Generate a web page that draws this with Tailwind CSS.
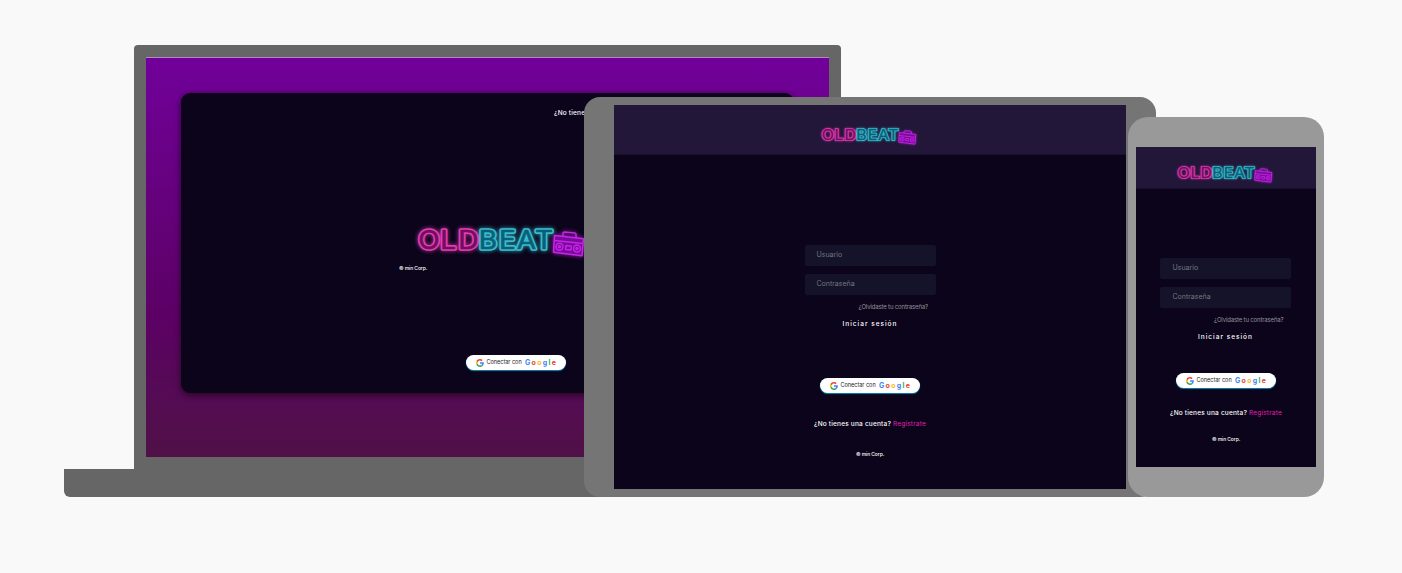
<!DOCTYPE html>
<html lang="es">
<head>
<meta charset="utf-8">
<title>OldBeat</title>
<script src="https://cdn.jsdelivr.net/npm/@tailwindcss/browser@4"></script>
</head>
<body class="bg-[#f9f9f9] w-[1402px] h-[573px] overflow-hidden font-['Inter','Roboto',sans-serif] text-white">
<svg class="hidden">
  <defs>
    <filter id="glow" x="-15%" y="-40%" width="130%" height="180%"><feGaussianBlur stdDeviation="2"/></filter>
    <g id="tubes" font-family="Inter, sans-serif" font-weight="400" font-size="25" stroke-linejoin="round" transform="scale(1.12 1)">
      <text x="5.500 25.300 41.200" y="27.300">OLD</text>
    </g>
    <g id="tubes2" font-family="Inter, sans-serif" font-weight="400" font-size="25" stroke-linejoin="round" transform="scale(1.12 1)">
      <text x="59.600 77.600 93.600 109.800" y="27.300">BEAT</text>
    </g>
    <g id="words">
      <use href="#tubes" fill="#e23eb6" stroke="#e23eb6" stroke-width="3.700"/>
      <use href="#tubes" fill="#720e5c" stroke="#720e5c" stroke-width="0.600"/>
      <use href="#tubes2" fill="#3cbccd" stroke="#3cbccd" stroke-width="3.700"/>
      <use href="#tubes2" fill="#086078" stroke="#086078" stroke-width="0.600"/>
    </g>
    <g id="radio" fill="#7a0a9c" stroke="#c526e4" stroke-width="1.5" stroke-linejoin="round">
      <path d="M151 14v-3l1-1 11 1 1 1v4" fill="none"/>
      <path d="M142.500 13.500l29 3.200-1.500 17-28.500-3.500z"/>
      <path d="M142 18.500l29 3" fill="none"/>
      <circle cx="147.500" cy="24.800" r="3.500"/><circle cx="165" cy="26.600" r="3.500"/>
      <circle cx="147.500" cy="24.800" r="1"/><circle cx="165" cy="26.600" r="1"/>
      <path d="M154 23.500l5.200.5-.3 4-5.200-.5z"/>
    </g>
    <symbol id="logo" viewBox="0 0 180 44">
      <g filter="url(#glow)"><use href="#words"/><use href="#radio"/></g>
      <use href="#words"/><use href="#radio"/>
    </symbol>
    <symbol id="g" viewBox="0 0 48 48">
      <path fill="#ea4335" d="M24 9.500c3.540 0 6.710 1.220 9.210 3.600l6.850-6.850C35.900 2.380 30.470 0 24 0 14.620 0 6.510 5.380 2.560 13.220l7.980 6.190C12.430 13.720 17.740 9.500 24 9.500z"/>
      <path fill="#4285f4" d="M46.980 24.550c0-1.570-.15-3.090-.38-4.550H24v9.020h12.940c-.58 2.960-2.260 5.480-4.780 7.180l7.730 6c4.510-4.180 7.090-10.360 7.090-17.650z"/>
      <path fill="#fbbc05" d="M10.530 28.590A14.500 14.500 0 0 1 9.770 24c0-1.600.27-3.140.76-4.590l-7.980-6.190A23.900 23.900 0 0 0 0 24c0 3.880.92 7.540 2.560 10.780z"/>
      <path fill="#34a853" d="M24 48c6.480 0 11.930-2.130 15.890-5.810l-7.730-6c-2.150 1.450-4.920 2.300-8.160 2.300-6.260 0-11.570-4.220-13.470-9.910l-7.980 6.190C6.510 42.620 14.620 48 24 48z"/>
    </symbol>
  </defs>
</svg>

<main class="flex items-end h-[497px] pl-16 w-[1402px]">
  <!-- Laptop -->
  <section class="flex flex-col items-center shrink-0 w-[847px]">
    <div class="w-[707px] h-[424px] bg-[#666] rounded-t-[4px] p-3">
      <div class="w-[683px] h-[400px] border-t border-[#b18ac0] bg-linear-to-b from-[#71009a] via-[#5c0065] via-65% to-[#501047] pt-[35px] pl-[35px]">
        <div class="w-[613px] h-[300px] rounded-[9px] bg-[#0b041a] shadow-[0_2px_7px_rgba(0,0,0,0.6)] flex flex-col">
          <p class="ml-[373px] mt-[15px] h-[10px] leading-[10px] text-[6.500px] font-medium whitespace-nowrap tracking-[0.200px]">¿No tienes una cuenta? <span class="text-[#e01fb5] font-normal">Regístrate</span></p>
          <svg class="w-[180px] h-[44px] ml-[231px] mt-[104px] shrink-0"><use href="#logo"/></svg>
          <p class="ml-[218px] mt-[-2px] h-[8px] leading-[8px] text-[5px] font-medium whitespace-nowrap tracking-[-0.100px]">© min Corp.</p>
          <div class="ml-[285px] mt-[83px] w-[100px] h-[15px] rounded-full bg-white shadow-[0_1px_1px_#0b85b5] flex items-center pl-[10px] shrink-0">
            <svg class="size-[8px]"><use href="#g"/></svg>
            <span class="ml-[2.500px] w-[38.500px] text-[5.500px] leading-none text-[#222] whitespace-nowrap">Conectar con</span>
            <span class="text-[7px] leading-none font-bold tracking-[1.300px] text-[#4285f4]">G<span class="text-[#ea4335]">o</span><span class="text-[#fbbc05]">o</span>g<span class="text-[#34a853]">l</span><span class="text-[#ea4335]">e</span></span>
          </div>
        </div>
      </div>
    </div>
    <div class="w-full h-7 bg-[#666] rounded-b-[6px]"></div>
  </section>

  <!-- Tablet -->
  <section class="z-10 shrink-0 w-[572px] h-[400px] -ml-[327px] rounded-[16px] bg-[#757575] px-[30px] py-2">
    <div class="h-[384px] bg-[#0b041a] flex flex-col items-center">
      <header class="w-full h-[50px] bg-[#221639] border-b border-[#1a102c] flex justify-center pt-[19.500px] pr-[2px]">
        <svg class="w-[103px] h-[25px] shrink-0"><use href="#logo"/></svg>
      </header>
      <form class="w-[131px] mt-[90px] flex flex-col">
        <div class="h-[21px] rounded-[2px] bg-[#14132a] pl-3 text-[7px] leading-[20px] text-[#77757c]">Usuario</div>
        <div class="h-[21px] mt-[7.500px] rounded-[2px] bg-[#14132a] pl-3 text-[7px] leading-[20px] text-[#77757c]">Contraseña</div>
        <a class="mt-[7.500px] mr-[7.500px] text-right text-[6px] leading-[10px] text-[#96939b] whitespace-nowrap tracking-[-0.150px]">¿Olvidaste tu contraseña?</a>
        <button type="button" class="mt-[6.500px] text-[6.500px] leading-[10px] font-medium tracking-[1px] whitespace-nowrap">Iniciar sesión</button>
      </form>
      <div class="mt-[49.500px] w-[100px] h-[15px] rounded-full bg-white shadow-[0_1px_1px_#0b85b5] flex items-center pl-[10px] shrink-0">
        <svg class="size-[8px]"><use href="#g"/></svg>
        <span class="ml-[2.500px] w-[38.500px] text-[5.500px] leading-none text-[#222] whitespace-nowrap">Conectar con</span>
        <span class="text-[7px] leading-none font-bold tracking-[1.300px] text-[#4285f4]">G<span class="text-[#ea4335]">o</span><span class="text-[#fbbc05]">o</span>g<span class="text-[#34a853]">l</span><span class="text-[#ea4335]">e</span></span>
      </div>
      <p class="mt-[26px] text-[6.500px] leading-[10px] font-medium whitespace-nowrap tracking-[0.200px]">¿No tienes una cuenta? <span class="text-[#e01fb5] font-normal">Regístrate</span></p>
      <p class="mt-[21px] text-[5px] leading-[8px] font-medium whitespace-nowrap tracking-[-0.100px]">© min Corp.</p>
    </div>
  </section>

  <!-- Phone -->
  <section class="z-20 shrink-0 w-[196px] h-[380px] -ml-[28px] rounded-[20px] bg-[#999] px-2 py-[30px]">
    <div class="h-[320px] bg-[#0b041a] flex flex-col items-center">
      <header class="w-full h-[42px] bg-[#221639] border-b border-[#1a102c] flex justify-center pt-[15.500px] pr-[2px]">
        <svg class="w-[103px] h-[25px] shrink-0"><use href="#logo"/></svg>
      </header>
      <form class="w-[131px] mt-[69px] mr-px flex flex-col">
        <div class="h-[21px] rounded-[2px] bg-[#14132a] pl-[12.500px] text-[7px] leading-[20px] text-[#77757c]">Usuario</div>
        <div class="h-[21px] mt-[7.500px] rounded-[2px] bg-[#14132a] pl-[12.500px] text-[7px] leading-[20px] text-[#77757c]">Contraseña</div>
        <a class="mt-[7.500px] mr-[7.500px] text-right text-[6px] leading-[10px] text-[#96939b] whitespace-nowrap tracking-[-0.150px]">¿Olvidaste tu contraseña?</a>
        <button type="button" class="mt-[6.500px] text-[6.500px] leading-[10px] font-medium tracking-[1px] whitespace-nowrap">Iniciar sesión</button>
      </form>
      <div class="mt-[31.500px] w-[100px] h-[15px] rounded-full bg-white shadow-[0_1px_1px_#0b85b5] flex items-center pl-[10px] shrink-0">
        <svg class="size-[8px]"><use href="#g"/></svg>
        <span class="ml-[2.500px] w-[38.500px] text-[5.500px] leading-none text-[#222] whitespace-nowrap">Conectar con</span>
        <span class="text-[7px] leading-none font-bold tracking-[1.300px] text-[#4285f4]">G<span class="text-[#ea4335]">o</span><span class="text-[#fbbc05]">o</span>g<span class="text-[#34a853]">l</span><span class="text-[#ea4335]">e</span></span>
      </div>
      <p class="mt-[20px] text-[6.500px] leading-[10px] font-medium whitespace-nowrap tracking-[0.200px]">¿No tienes una cuenta? <span class="text-[#e01fb5] font-normal">Regístrate</span></p>
      <p class="mt-[17px] text-[5px] leading-[8px] font-medium whitespace-nowrap tracking-[-0.100px]">© min Corp.</p>
    </div>
  </section>
</main>
</body>
</html>
